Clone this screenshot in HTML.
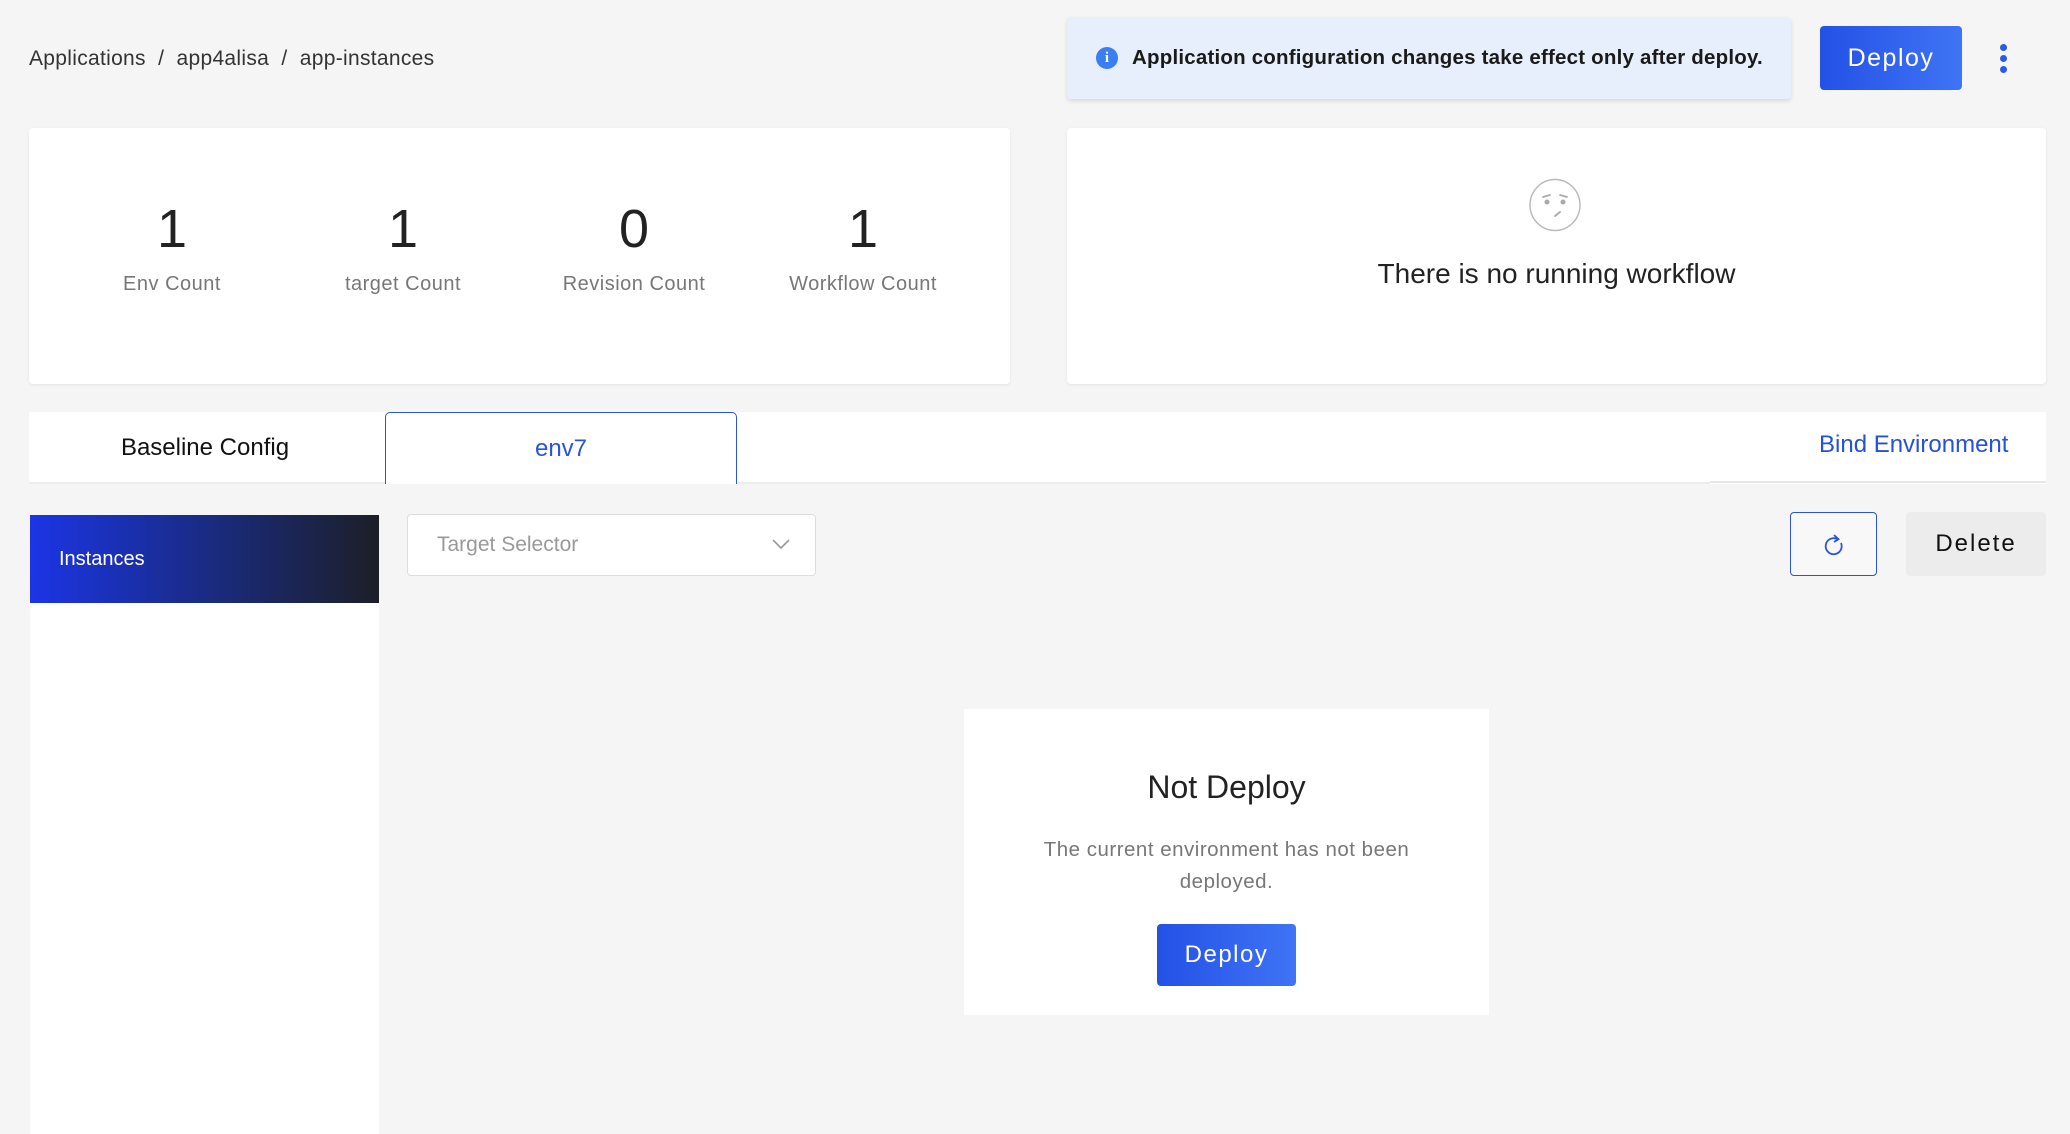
<!DOCTYPE html>
<html><head><meta charset="utf-8"><style>
*{box-sizing:border-box;margin:0;padding:0}
body{width:2070px;height:1134px;background:#f5f5f5;font-family:"Liberation Sans",sans-serif;position:relative;overflow:hidden;color:#222}
.a{position:absolute}
.card{background:#fff;border-radius:4px;box-shadow:0 1px 3px rgba(0,0,0,.08)}
.num{position:absolute;top:70px;width:240px;text-align:center;font-size:54px;color:#222}
.lab{position:absolute;top:145px;width:240px;text-align:center;font-size:20px;color:#777;letter-spacing:.5px}
.btn{background:linear-gradient(90deg,#2451e6,#3f74f5);color:#fff;border-radius:4px;display:flex;align-items:center;justify-content:center;letter-spacing:1.5px}
</style></head><body>
<div class="a" style="left:29px;top:47px;font-size:21px;color:#333;letter-spacing:.3px">Applications &nbsp;/&nbsp; app4alisa &nbsp;/&nbsp; app-instances</div>
<div class="a" style="left:1067px;top:17px;width:724px;height:82px;background:#e7effc;border-radius:4px;box-shadow:0 2px 5px rgba(0,0,0,.12);display:flex;align-items:center;padding-left:29px">
<div style="width:22px;height:22px;border-radius:50%;background:#3a7ef0;color:#fff;font-size:15px;font-weight:bold;text-align:center;line-height:22px;font-family:'Liberation Serif',serif">i</div>
<div style="margin-left:14px;font-size:20.5px;font-weight:bold;color:#1a1a1a;letter-spacing:.2px">Application configuration changes take effect only after deploy.</div></div>
<div class="a btn" style="left:1820px;top:26px;width:142px;height:64px;font-size:25px">Deploy</div>
<div class="a" style="left:2000px;top:44px;width:7px">
<div style="width:7px;height:7px;border-radius:50%;background:#2a5ae8;margin-bottom:4px"></div>
<div style="width:7px;height:7px;border-radius:50%;background:#2a5ae8;margin-bottom:4px"></div>
<div style="width:7px;height:7px;border-radius:50%;background:#2a5ae8"></div></div>
<div class="a card" style="left:29px;top:128px;width:981px;height:256px">
<div class="num" style="left:23px">1</div><div class="lab" style="left:23px">Env Count</div>
<div class="num" style="left:254px">1</div><div class="lab" style="left:254px">target Count</div>
<div class="num" style="left:485px">0</div><div class="lab" style="left:485px">Revision Count</div>
<div class="num" style="left:714px">1</div><div class="lab" style="left:714px">Workflow Count</div>
</div>
<div class="a card" style="left:1067px;top:128px;width:979px;height:256px">
<svg class="a" style="left:461px;top:50px" width="54" height="54" viewBox="0 0 54 54"><ellipse cx="27" cy="27" rx="25" ry="25.5" fill="none" stroke="#bbb" stroke-width="1.5"/><circle cx="19" cy="24" r="2.5" fill="#aaa"/><circle cx="35" cy="24" r="2.5" fill="#aaa"/><path d="M15 19l7-2M32 17l7 2M27 38l5-4" stroke="#aaa" stroke-width="1.8" fill="none" stroke-linecap="round"/></svg>
<div class="a" style="left:0;top:130px;width:979px;text-align:center;font-size:28px;color:#222">There is no running workflow</div>
</div>
<div class="a" style="left:29px;top:412px;width:2017px;height:72px;background:#fff"></div>
<div class="a" style="left:1710px;top:481px;width:336px;height:2px;background:#e6e6e6"></div>
<div class="a" style="left:29px;top:482px;width:1681px;height:2px;background:#ececec"></div>
<div class="a" style="left:29px;top:412px;width:352px;height:72px;display:flex;align-items:center;justify-content:center;font-size:24px;color:#111;border-radius:4px 4px 0 0">Baseline Config</div>
<div class="a" style="left:385px;top:412px;width:352px;height:72px;border:1.5px solid #2a55d8;border-bottom:none;border-radius:5px 5px 0 0;background:#fff;display:flex;align-items:center;justify-content:center;font-size:24px;color:#2a55d8">env7</div>
<div class="a" style="left:1819px;top:431px;font-size:24px;color:#2451d6">Bind Environment</div>
<div class="a" style="left:30px;top:515px;width:349px;height:619px;background:#fff"></div>
<div class="a" style="left:30px;top:515px;width:349px;height:88px;background:linear-gradient(90deg,#1b35e6,#1a2a7a 55%,#1c1f27);color:#fff;font-size:20px;padding-left:29px;display:flex;align-items:center">Instances</div>
<div class="a" style="left:407px;top:514px;width:409px;height:62px;background:#fff;border:1px solid #ddd;border-radius:4px;font-size:21px;color:#999;padding-left:29px;display:flex;align-items:center">Target Selector
<svg class="a" style="right:25px;top:24px" width="18" height="11" viewBox="0 0 18 11"><path d="M1 1l8 8 8-8" stroke="#999" stroke-width="1.6" fill="none"/></svg></div>
<div class="a" style="left:1790px;top:512px;width:87px;height:64px;border:1.5px solid #2a55d8;border-radius:4px;background:#f8f8f8">
<svg class="a" style="left:32px;top:20px" width="22" height="24" viewBox="0 0 22 24"><path d="M14.5 6.2A8 8 0 1 0 18 10" stroke="#2a55d8" stroke-width="1.8" fill="none"/><path d="M11 2l4.5 4.2L11 9" stroke="#2a55d8" stroke-width="1.8" fill="none"/></svg></div>
<div class="a" style="left:1906px;top:512px;width:140px;height:64px;background:#ececec;border-radius:4px;display:flex;align-items:center;justify-content:center;font-size:24px;letter-spacing:2px;color:#111">Delete</div>
<div class="a" style="left:964px;top:709px;width:525px;height:306px;background:#fff">
<div class="a" style="left:0;top:60px;width:525px;text-align:center;font-size:32px;color:#222">Not Deploy</div>
<div class="a" style="left:40px;top:125px;width:445px;text-align:center;font-size:20.5px;color:#777;line-height:32px;letter-spacing:.5px">The current environment has not been deployed.</div>
<div class="a btn" style="left:193px;top:215px;width:139px;height:62px;font-size:24px">Deploy</div>
</div>
</body></html>
